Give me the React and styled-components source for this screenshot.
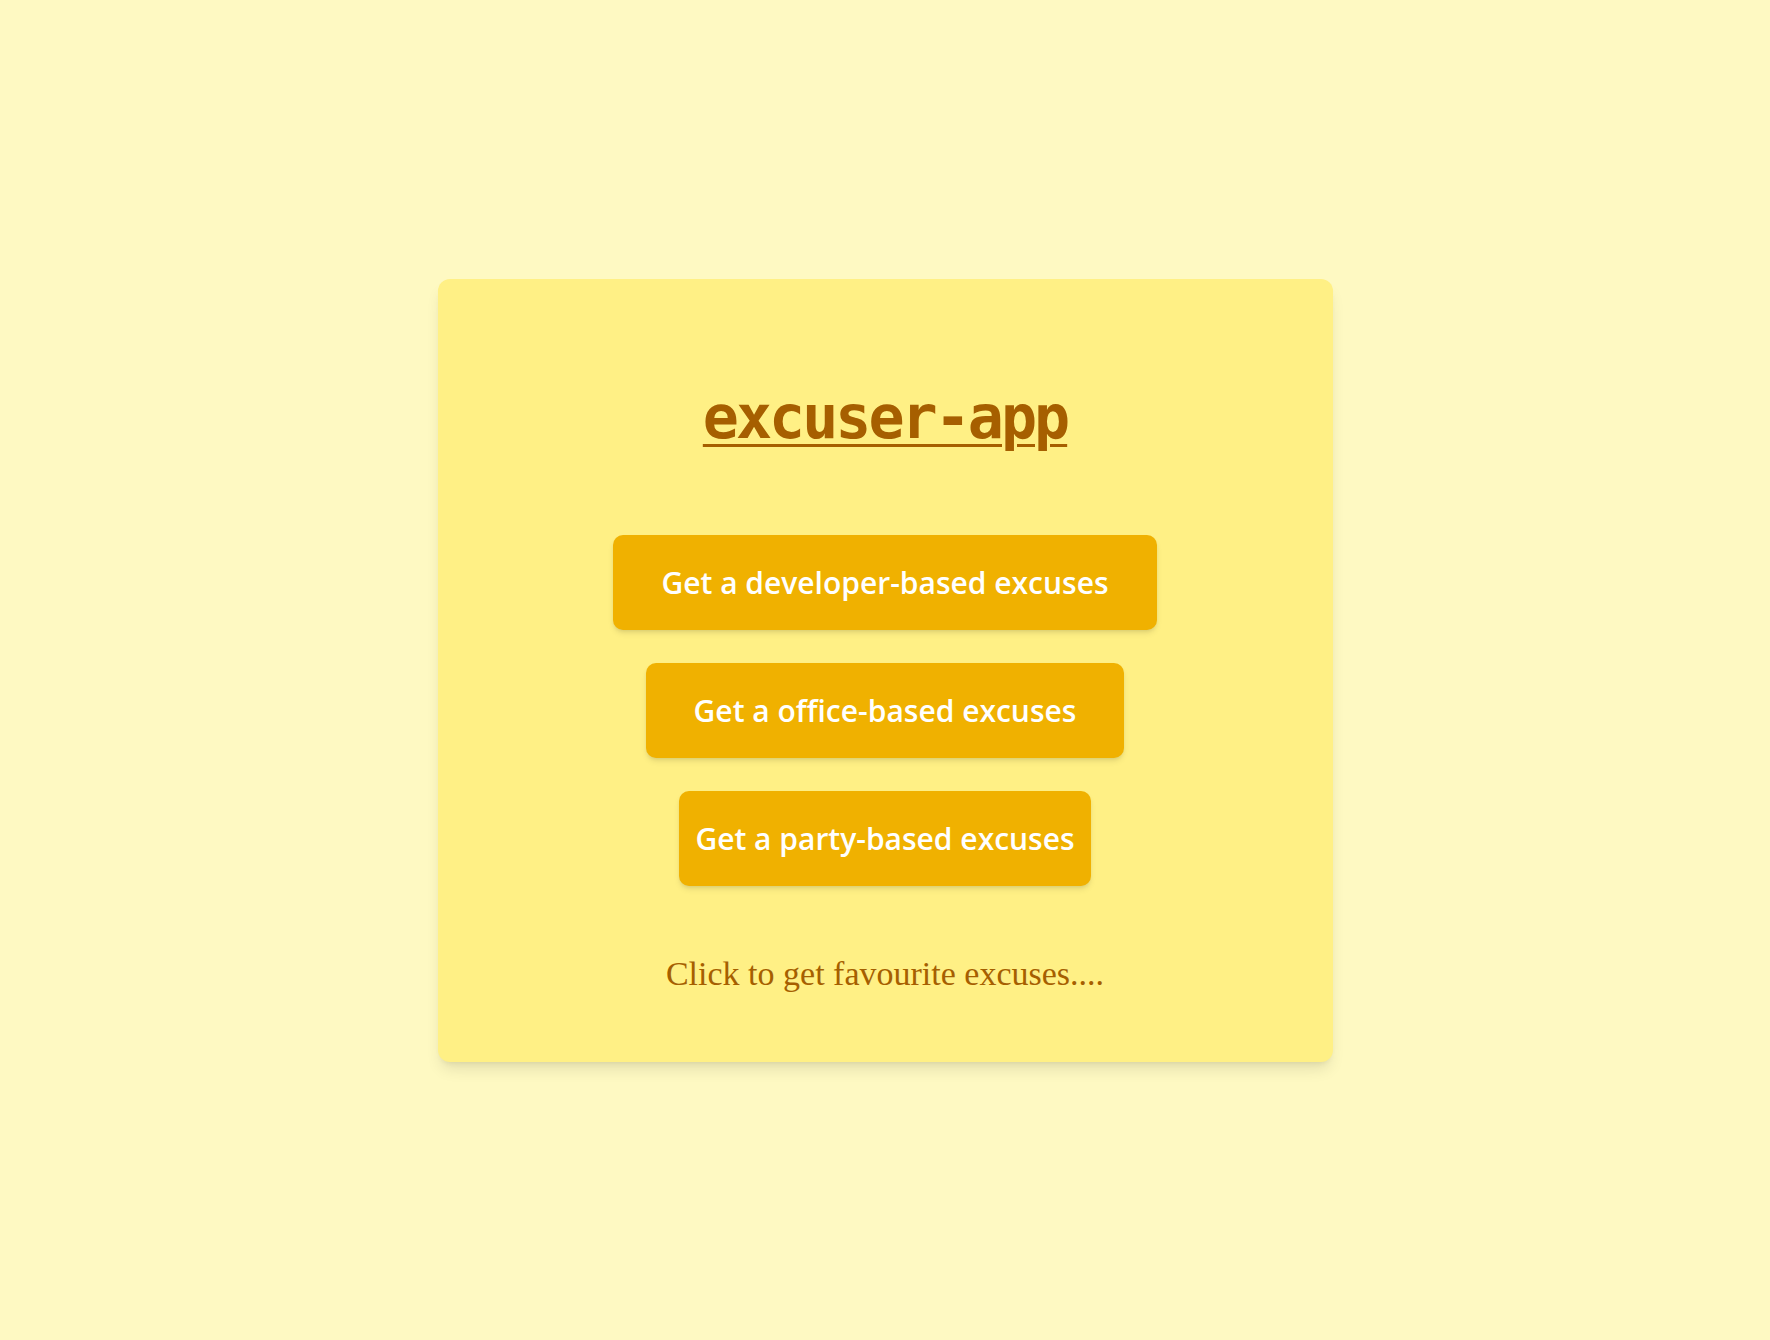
import React from "react";
import styled, { createGlobalStyle } from "styled-components";

const GlobalStyle = createGlobalStyle`
  html, body {
    margin: 0;
    padding: 0;
  }
  body {
    background-color: #fef9c2;
  }
`;

const categories = [
  { name: "developer", pad: 48 },
  { name: "office", pad: 48 },
  { name: "party", pad: 16 },
];

const App = () => {
  return (
    <>
      <GlobalStyle />
      <Page>
        <Card>
          <Title>excuser-app</Title>
          <ButtonList>
            {categories.map((c) => (
              <ExcuseButton key={c.name} type="button" $pad={c.pad}>
                Get a {c.name}-based excuses
              </ExcuseButton>
            ))}
          </ButtonList>
          <Hint>Click to get favourite excuses....</Hint>
        </Card>
      </Page>
    </>
  );
};

const Page = styled.div`
  min-height: 100vh;
  display: flex;
  align-items: center;
  justify-content: center;
  background-color: #fef9c2;
`;

const Card = styled.div`
  width: 895px;
  box-sizing: border-box;
  padding: 108px 0 70px;
  display: flex;
  flex-direction: column;
  align-items: center;
  background-color: #fff085;
  border-radius: 12px;
  box-shadow: 0 10px 15px -3px rgba(0, 0, 0, 0.1),
    0 4px 6px -4px rgba(0, 0, 0, 0.1);
`;

const Title = styled.h1`
  margin: 0;
  height: 60px;
  font-family: "DejaVu Sans Mono", "Liberation Mono", monospace;
  font-size: 60px;
  line-height: 60px;
  font-weight: 700;
  letter-spacing: -3px;
  color: #a65f00;
  text-decoration: underline;
  text-decoration-thickness: 3px;
  text-underline-offset: 6px;
`;

const ButtonList = styled.div`
  margin-top: 88px;
  display: flex;
  flex-direction: column;
  align-items: center;
  gap: 33px;
`;

const ExcuseButton = styled.button`
  height: 95px;
  padding: 0 ${(p) => p.$pad}px;
  border: none;
  border-radius: 10px;
  background-color: #f0b100;
  color: #ffffff;
  font-family: "Open Sans", "Noto Sans", sans-serif;
  font-size: 30px;
  font-weight: 600;
  cursor: pointer;
  box-shadow: 0 4px 6px -1px rgba(0, 0, 0, 0.1),
    0 2px 4px -2px rgba(0, 0, 0, 0.1);
`;

const Hint = styled.p`
  margin: 70px 0 0;
  font-family: "Liberation Serif", "DejaVu Serif", serif;
  font-size: 34px;
  line-height: 36px;
  color: #a65f00;
`;

export default App;
